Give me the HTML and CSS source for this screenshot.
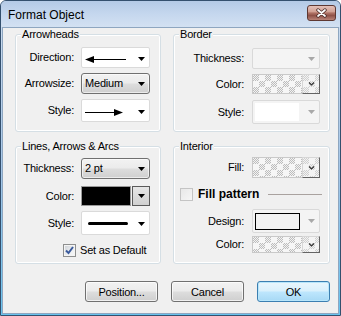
FILE: index.html
```html
<!DOCTYPE html>
<html>
<head>
<meta charset="utf-8">
<title>Format Object</title>
<link rel="stylesheet" href="styles.css">
</head>
<body>
<div class="window">
  <div class="titlebar">
    <span class="title">Format Object</span>
    <span class="close"><svg width="13" height="10" viewBox="0 0 13 10"><path d="M3 2 L10 8 M10 2 L3 8" stroke="#4b2b27" stroke-width="3.4" stroke-linecap="round"/><path d="M3 2 L10 8 M10 2 L3 8" stroke="#ffffff" stroke-width="1.7" stroke-linecap="round"/></svg></span>
  </div>
  <div class="client">
    <div class="groups">
      <div class="group g-left">
        <span class="legend">Arrowheads</span>
        <div class="row mt6">
          <span class="lbl">Direction:</span>
          <div class="combo owner h21">
            <svg class="art" width="41" height="9" viewBox="0 0 41 9"><path d="M0 4.5 L9 1 L9 8 Z" fill="#000"/><rect x="8" y="4" width="33" height="1" fill="#000"/></svg>
            <svg class="tri" width="7" height="4" viewBox="0 0 7 4"><path d="M0 0h7L3.5 4z" fill="#000"/></svg>
          </div>
        </div>
        <div class="row mt5">
          <span class="lbl">Arrowsize:</span>
          <div class="combo std h21">
            <span class="val">Medium</span>
            <svg class="tri" width="7" height="4" viewBox="0 0 7 4"><path d="M0 0h7L3.5 4z" fill="#000"/></svg>
          </div>
        </div>
        <div class="row mt5">
          <span class="lbl">Style:</span>
          <div class="combo owner h23">
            <svg class="art" width="39" height="9" viewBox="0 0 39 9"><rect x="0" y="4" width="30" height="1" fill="#000"/><path d="M29 1 L38 4.5 L29 8 Z" fill="#000"/></svg>
            <svg class="tri" width="7" height="4" viewBox="0 0 7 4"><path d="M0 0h7L3.5 4z" fill="#000"/></svg>
          </div>
        </div>
      </div>

      <div class="group g-right">
        <span class="legend">Border</span>
        <div class="row mt7">
          <span class="lbl">Thickness:</span>
          <div class="combo dis h21">
            <svg class="tri" width="7" height="4" viewBox="0 0 7 4"><path d="M0 0h7L3.5 4z" fill="#a8a8a8"/></svg>
          </div>
        </div>
        <div class="row mt5">
          <span class="lbl">Color:</span>
          <div class="combo chk h20">
            <span class="pat"></span>
            <span class="ddchk"><svg width="7" height="4" viewBox="0 0 7 4"><path d="M1 0.5 L3.5 3 L6 0.5" fill="none" stroke="#333" stroke-width="1.2"/></svg></span>
          </div>
        </div>
        <div class="row mt6">
          <span class="lbl">Style:</span>
          <div class="combo dis h24">
            <span class="whitebox"></span>
            <svg class="tri" width="7" height="4" viewBox="0 0 7 4"><path d="M0 0h7L3.5 4z" fill="#a8a8a8"/></svg>
          </div>
        </div>
      </div>

      <div class="group g-left">
        <span class="legend">Lines, Arrows &amp; Arcs</span>
        <div class="row mt5">
          <span class="lbl">Thickness:</span>
          <div class="combo std h21">
            <span class="val">2 pt</span>
            <svg class="tri" width="7" height="4" viewBox="0 0 7 4"><path d="M0 0h7L3.5 4z" fill="#000"/></svg>
          </div>
        </div>
        <div class="row mt7">
          <span class="lbl">Color:</span>
          <div class="combo colr h20">
            <span class="swatch"></span>
            <span class="ddbtn"><svg width="7" height="4" viewBox="0 0 7 4"><path d="M0 0h7L3.5 4z" fill="#000"/></svg></span>
          </div>
        </div>
        <div class="row mt5">
          <span class="lbl">Style:</span>
          <div class="combo owner thick h24">
            <svg class="art" width="40" height="3" viewBox="0 0 40 3"><rect x="0" y="0" width="40" height="3" rx="1.5" fill="#000"/></svg>
            <svg class="tri" width="7" height="4" viewBox="0 0 7 4"><path d="M0 0h7L3.5 4z" fill="#000"/></svg>
          </div>
        </div>
        <div class="row mt8 chkrow-default">
          <span class="cbox checked"><svg width="11" height="11" viewBox="0 0 11 11"><path d="M2 5.5 L4.5 8 L9 2" fill="none" stroke="#3a5a9c" stroke-width="2"/></svg></span>
          <span class="cbtext">Set as Default</span>
        </div>
      </div>

      <div class="group g-right">
        <span class="legend">Interior</span>
        <div class="row mt4">
          <span class="lbl">Fill:</span>
          <div class="combo chk h21">
            <span class="pat"></span>
            <span class="ddchk"><svg width="7" height="4" viewBox="0 0 7 4"><path d="M1 0.5 L3.5 3 L6 0.5" fill="none" stroke="#333" stroke-width="1.2"/></svg></span>
          </div>
        </div>
        <div class="row mt9 chkrow-fill">
          <span class="cbox light"></span>
          <span class="cbtext bold">Fill pattern</span>
          <span class="hr"></span>
        </div>
        <div class="row mt8">
          <span class="lbl">Design:</span>
          <div class="combo dis h24">
            <span class="design"></span>
            <svg class="tri" width="7" height="4" viewBox="0 0 7 4"><path d="M0 0h7L3.5 4z" fill="#a8a8a8"/></svg>
          </div>
        </div>
        <div class="row mt3">
          <span class="lbl">Color:</span>
          <div class="combo chk h17">
            <span class="pat"></span>
            <span class="ddchk"><svg width="7" height="4" viewBox="0 0 7 4"><path d="M1 0.5 L3.5 3 L6 0.5" fill="none" stroke="#333" stroke-width="1.2"/></svg></span>
          </div>
        </div>
      </div>
    </div>

    <div class="buttons">
      <button class="btn">Position...</button>
      <button class="btn">Cancel</button>
      <button class="btn default">OK</button>
    </div>
  </div>
</div>
</body>
</html>
```

FILE: styles.css
```css
html, body {
  margin: 0;
  padding: 0;
  background: #ffffff;
}

.window {
  width: 341px;
  height: 316px;
  box-sizing: border-box;
  border: 1px solid #34506e;
  border-radius: 6px 6px 0 0;
  background: linear-gradient(to bottom, #b6cbe6 0%, #c9daee 9%, #a4c6e8 55%, #66c3ef 100%);
  padding: 0 1px 1px 1px;
  display: flex;
  flex-direction: column;
  font-family: "Liberation Sans", Arial, sans-serif;
  font-size: 11px;
  color: #000;
}

.titlebar {
  height: 26px;
  display: flex;
  align-items: flex-start;
  background: linear-gradient(to bottom, #b4cae6 0%, #c5d7ee 50%, #d3e1f2 100%);
  margin: 0 -1px;
  border-radius: 5px 5px 0 0;
}

.title {
  font-size: 12px;
  line-height: 15px;
  margin: 7px 0 0 7px;
  color: #000;
}

.close {
  margin: 4px 4px 0 auto;
  width: 29px;
  height: 16px;
  box-sizing: border-box;
  border: 1px solid #5e3832;
  border-radius: 3px;
  background: linear-gradient(to bottom, #e4c0b8 0%, #d2a295 40%, #b07366 50%, #8f5248 68%, #b98377 100%);
  display: flex;
  align-items: center;
  justify-content: center;
}

.close svg {
  display: block;
}

.client {
  flex: 1;
  background: #f0f0f0;
  border: 1px solid #8ea6c0;
  padding: 6px 8px 0 12px;
  display: flex;
  flex-direction: column;
}

.groups {
  display: grid;
  grid-template-columns: 146px 157px;
  grid-template-rows: 98px 118px;
  column-gap: 12px;
  row-gap: 14px;
}

.group {
  box-sizing: border-box;
  border: 1px solid #d5dfe5;
  border-radius: 3px;
  box-shadow: inset 0 0 0 1px #ffffff;
  display: flex;
  flex-direction: column;
  letter-spacing: -0.2px;
}

.legend {
  align-self: flex-start;
  margin: -7px 0 0 5px;
  padding: 0 1px;
  line-height: 13px;
  background: #f0f0f0;
}

.row {
  display: flex;
  align-items: center;
}

.mt3 { margin-top: 3px; }
.mt4 { margin-top: 4px; }
.mt5 { margin-top: 5px; }
.mt6 { margin-top: 6px; }
.mt7 { margin-top: 7px; }
.mt8 { margin-top: 8px; }
.mt9 { margin-top: 9px; }

.lbl {
  text-align: right;
  line-height: 13px;
  white-space: nowrap;
}

.g-left .lbl {
  width: 58px;
  margin-right: 7px;
}

.g-right .lbl {
  width: 70px;
  margin-right: 8px;
}

.combo {
  box-sizing: border-box;
  display: flex;
  align-items: center;
  flex: none;
}

.g-left .combo { width: 69px; }
.g-right .combo { width: 68px; }

.h17 { height: 17px; }
.h20 { height: 20px; }
.h21 { height: 21px; }
.h23 { height: 23px; }
.h24 { height: 24px; }

.tri {
  display: block;
  margin-left: auto;
  flex: none;
}

.combo.owner {
  background: #ffffff;
  border: 1px solid #dadada;
  border-radius: 2px;
  padding: 3px 4px 0 3px;
}

.combo.owner.thick {
  padding: 1px 4px 0 6px;
}

.art {
  display: block;
  flex: none;
}

.combo.std {
  border: 1px solid #707070;
  border-radius: 3px;
  background: linear-gradient(to bottom, #f2f2f2 0%, #ebebeb 48%, #dddddd 52%, #cfcfcf 100%);
  box-shadow: inset 0 0 0 1px rgba(255, 255, 255, 0.6);
  padding: 0 4px 0 3px;
}

.val {
  line-height: 13px;
}

.combo.dis {
  background: #f4f4f4;
  border: 1px solid #d9d9d9;
  border-radius: 2px;
  padding: 0 4px 0 2px;
}

.whitebox {
  width: 44px;
  height: 18px;
  background: #ffffff;
  flex: none;
}

.design {
  width: 45px;
  height: 17px;
  box-sizing: border-box;
  border: 1px solid #000000;
  background: #f2f2f2;
  flex: none;
}

.combo.chk {
  align-items: stretch;
}

.pat {
  flex: 1;
  border: 1px solid #c9c9c9;
  border-right: none;
  background:
    conic-gradient(#f6f6f6 25%, transparent 0 50%, #f6f6f6 0 75%, transparent 0) 0 0 / 12px 12px,
    repeating-conic-gradient(#bdbdbd 0 25%, #f2f2f2 0 50%) 0 0 / 2px 2px;
}

.ddchk {
  width: 18px;
  box-sizing: border-box;
  border-top: 1px solid #d6d6d6;
  border-left: 1px solid #d6d6d6;
  border-right: 1px solid #646464;
  border-bottom: 1px solid #646464;
  background:
    conic-gradient(#f4f4f4 25%, transparent 0 50%, #f4f4f4 0 75%, transparent 0) 0 0 / 12px 12px,
    repeating-conic-gradient(#cfcfcf 0 25%, #f2f2f2 0 50%) 0 0 / 2px 2px;
  display: flex;
  align-items: center;
  justify-content: center;
}

.ddchk svg {
  display: block;
}

.combo.colr {
  align-items: stretch;
}

.swatch {
  flex: 1;
  background: #000000;
  border: 1px solid #9a9a9a;
  margin-right: 1px;
}

.ddbtn {
  width: 18px;
  box-sizing: border-box;
  border: 1px solid #5a5a5a;
  background: linear-gradient(to bottom, #e6e6e6, #d0d0d0);
  display: flex;
  align-items: center;
  justify-content: center;
}

.ddbtn svg {
  display: block;
}

.cbox {
  width: 13px;
  height: 13px;
  box-sizing: border-box;
  flex: none;
  display: flex;
  align-items: center;
  justify-content: center;
}

.cbox.checked {
  border: 1px solid #8e8f8f;
  background: linear-gradient(135deg, #cbcfd5 0%, #eef0f2 60%, #f8f8f8 100%);
  box-shadow: inset 0 0 0 1px #f4f4f4;
}

.cbox.light {
  border: 1px solid #c4c4c4;
  background: linear-gradient(135deg, #e8e8e8 0%, #f6f6f6 100%);
}

.cbox svg {
  display: block;
}

.chkrow-default {
  margin-left: 47px;
  height: 14px;
}

.chkrow-default .cbtext {
  margin-left: 4px;
}

.chkrow-fill {
  margin-left: 6px;
  height: 14px;
}

.cbtext {
  line-height: 13px;
  white-space: nowrap;
}

.cbtext.bold {
  font-weight: bold;
  font-size: 12px;
  letter-spacing: 0;
  margin-left: 5px;
}

.hr {
  flex: 1;
  height: 1px;
  background: #a9a29f;
  margin: 0 7px 0 9px;
}

.buttons {
  display: flex;
  justify-content: flex-end;
  gap: 13px;
  margin-top: 17px;
}

.btn {
  width: 73px;
  height: 21px;
  box-sizing: border-box;
  margin: 0;
  padding: 0;
  font-family: "Liberation Sans", Arial, sans-serif;
  font-size: 11px;
  letter-spacing: -0.2px;
  color: #000;
  border: 1px solid #707070;
  border-radius: 3px;
  background: linear-gradient(to bottom, #f2f2f2 0%, #ebebeb 48%, #dddddd 52%, #cfcfcf 100%);
  box-shadow: inset 0 0 0 1px rgba(255, 255, 255, 0.7);
}

.btn.default {
  border-color: #3c7fb1;
  background: linear-gradient(to bottom, #eaf6fd 0%, #d9f0fc 48%, #bee6fd 52%, #a7d9f5 100%);
  box-shadow: inset 0 0 0 1px #b8e6fb;
}
```
